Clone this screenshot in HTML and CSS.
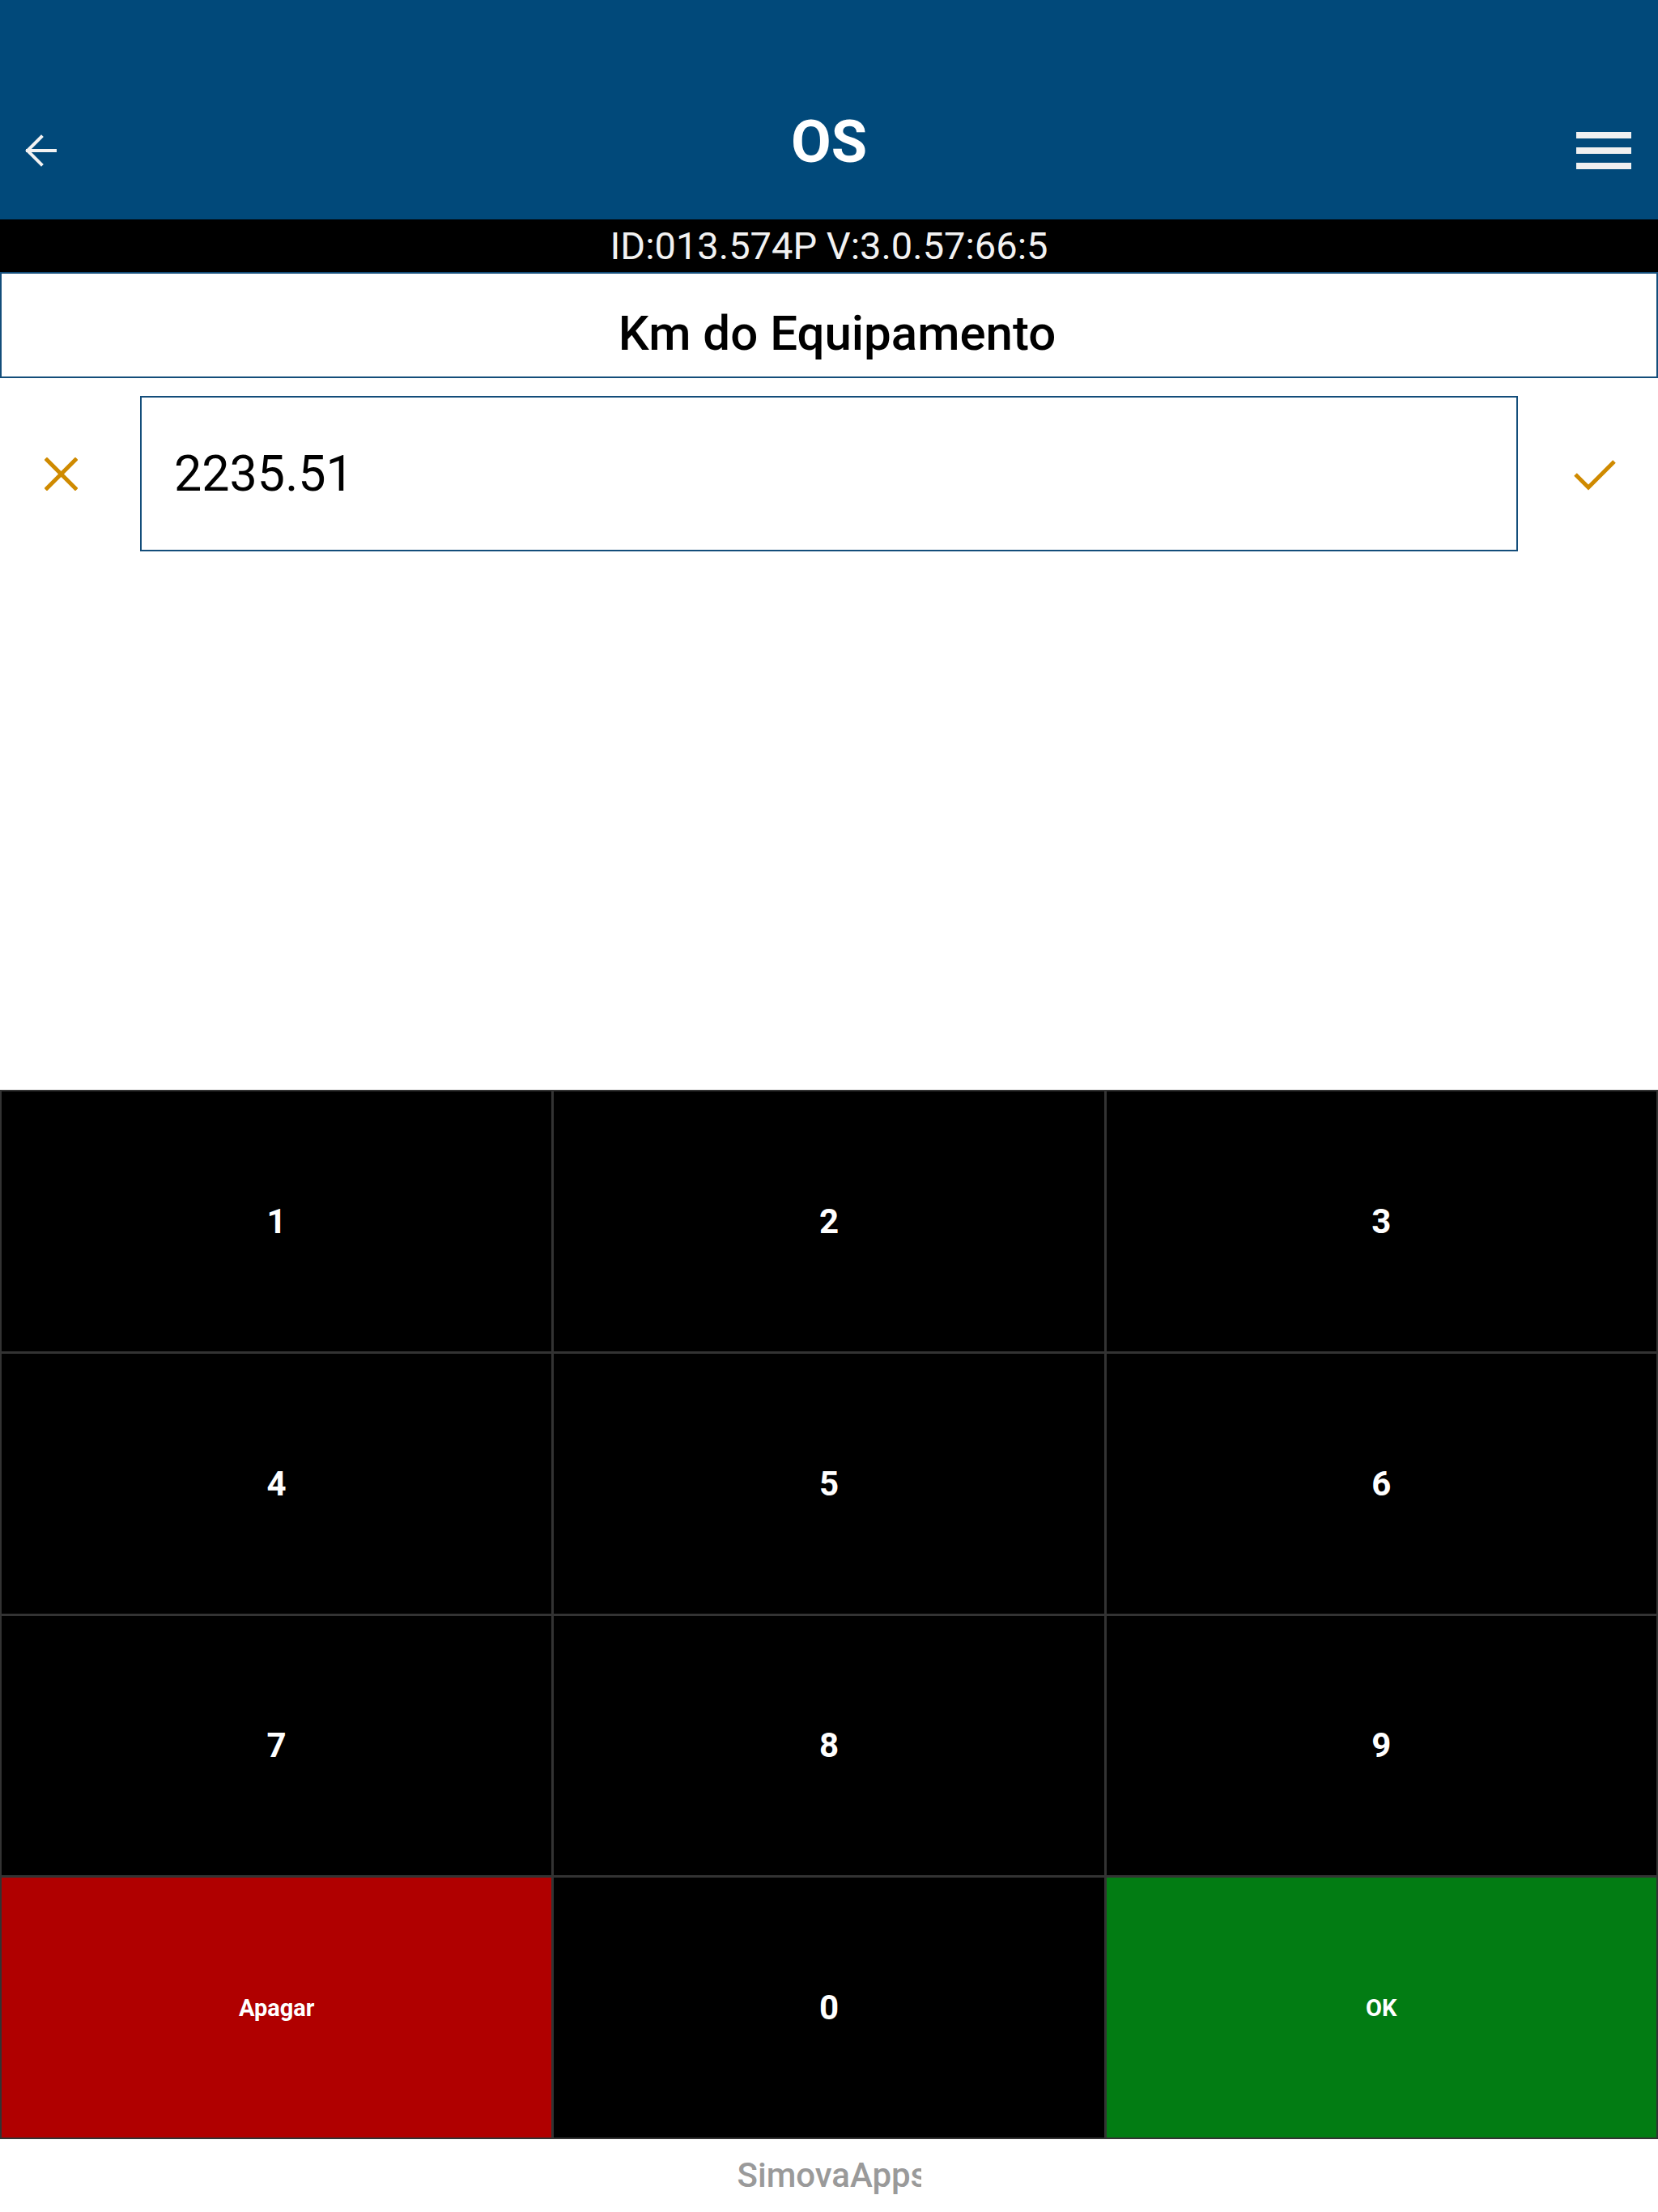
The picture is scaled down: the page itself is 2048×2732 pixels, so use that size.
FILE: index.html
```html
<!DOCTYPE html>
<html lang="pt-br">
<head>
    <meta charset="UTF-8">
    <meta name="viewport" content="width=device-width, initial-scale=1.0">
    <title>OS - Km do Equipamento</title>
    <link rel="stylesheet" href="styles.css">
</head>
<body>
   <div class="app">
    <header class="topo">
        <a href="#" class="btn-voltar" aria-label="Voltar">
            <svg width="40" height="40" viewBox="0 0 40 40">
                <path d="M38 20H4M21 3L4 20L21 37" fill="none" stroke="#f2f2f2" stroke-width="4" stroke-linecap="square"/>
            </svg>
        </a>
        <h1 class="titulo">OS</h1>
        <a href="#" class="btn-menu" aria-label="Menu">
            <svg width="68" height="46" viewBox="0 0 68 46">
                <rect x="0" y="0" width="68" height="8" fill="#f0f0f0"/>
                <rect x="0" y="19" width="68" height="8" fill="#f0f0f0"/>
                <rect x="0" y="38" width="68" height="8" fill="#f0f0f0"/>
            </svg>
        </a>
    </header>

    <div class="barra-id">ID:013.574P V:3.0.57:66:5</div>

    <div class="pergunta">Km do Equipamento</div>

    <form action="" id="form" class="linha-valor">
        <button type="button" class="icone-btn cancelar" aria-label="Cancelar">
            <svg width="41" height="41" viewBox="0 0 41 41">
                <path d="M3 3L38 38M38 3L3 38" stroke="#cf8a00" stroke-width="5" stroke-linecap="square"/>
            </svg>
        </button>
        <input type="text" id="km" class="input-valor" value="2235.51" readonly>
        <button type="button" class="icone-btn confirmar" aria-label="Confirmar">
            <svg width="54" height="42" viewBox="0 0 54 42">
                <path d="M3 22L19 38L51 6" fill="none" stroke="#cf8a00" stroke-width="5"/>
            </svg>
        </button>
    </form>

    <div class="espaco"></div>

    <div class="teclado">
        <button class="tecla">1</button>
        <button class="tecla">2</button>
        <button class="tecla">3</button>
        <button class="tecla">4</button>
        <button class="tecla">5</button>
        <button class="tecla">6</button>
        <button class="tecla">7</button>
        <button class="tecla">8</button>
        <button class="tecla">9</button>
        <button class="tecla tecla-apagar">Apagar</button>
        <button class="tecla">0</button>
        <button class="tecla tecla-ok">OK</button>
    </div>

    <footer class="rodape"><span class="marca">SimovaApps</span></footer>
   </div>

    <script>
        const teclas = document.querySelectorAll('.tecla');

        for (const tecla of teclas){
            tecla.addEventListener('click', () =>{
                const txt = tecla.textContent;
                if(txt == 'Apagar'){
                    km.value = km.value.slice(0, -1);
                }else if(txt != 'OK'){
                    km.value = km.value + txt;
                }
            })
        }
    </script>
</body>
</html>
```

FILE: styles.css
```css
* {
    box-sizing: border-box;
}

body{
    margin: 0;
    font-family: "Roboto", "Liberation Sans", sans-serif;
    background-color: #fff;
}

.app {
    width: 2048px;
    height: 2732px;
    display: flex;
    flex-direction: column;
}

/* barra azul do topo */
.topo {
    height: 271px;
    padding-top: 100px;
    background-color: #01497a;
    display: grid;
    grid-template-columns: 1fr auto 1fr;
    align-items: center;
}

.btn-voltar {
    justify-self: start;
    margin-left: 30px;
    display: flex;
}

.btn-menu {
    justify-self: end;
    margin-right: 33px;
    display: flex;
}

.titulo {
    margin: 0 0 20px 0;
    color: #fff;
    font-size: 72px;
    font-weight: 700;
    line-height: 84px;
}

.barra-id {
    height: 65px;
    line-height: 65px;
    background-color: #000;
    color: #f2f2f2;
    font-size: 47px;
    text-align: center;
}

.pergunta {
    height: 131px;
    border: 2px solid #134d7a;
    padding-top: 20px;
    padding-left: 20px;
    line-height: 107px;
    font-size: 60px;
    font-weight: 500;
    text-align: center;
    color: #000;
}

.linha-valor {
    display: flex;
    align-items: center;
    margin: 22px 0 0 0;
    padding-left: 55px;
}

.icone-btn {
    background: none;
    border: none;
    padding: 0;
    display: flex;
}

.cancelar {
    margin-right: 77px;
}

.confirmar {
    margin-left: 68px;
}

.input-valor {
    width: 1702px;
    height: 192px;
    border: 2px solid #134d7a;
    border-radius: 0;
    padding: 0 40px;
    font-family: "Roboto", sans-serif;
    font-size: 61px;
    color: #000;
    outline: none;
}

.espaco {
    flex: 1;
}

/* teclado numerico */
.teclado {
    height: 1296px;
    display: grid;
    grid-template-columns: repeat(3, 1fr);
    grid-template-rows: repeat(4, 1fr);
    gap: 3px;
    padding: 2px;
    background-color: #333;
}

.tecla {
    background-color: #000;
    color: #fff;
    border: none;
    font-family: "Roboto", sans-serif;
    font-size: 42px;
    font-weight: 700;
    cursor: pointer;
}

.tecla-apagar {
    background-color: #b00000;
    font-size: 29px;
}

.tecla-ok {
    background-color: #027c13;
    font-size: 29px;
}

.rodape {
    height: 90px;
    line-height: 90px;
    text-align: center;
}

.marca {
    display: inline-block;
    width: 227px;
    overflow: hidden;
    white-space: nowrap;
    vertical-align: top;
    text-align: left;
    color: #9a9a9a;
    font-size: 42px;
    font-weight: 500;
}
```
